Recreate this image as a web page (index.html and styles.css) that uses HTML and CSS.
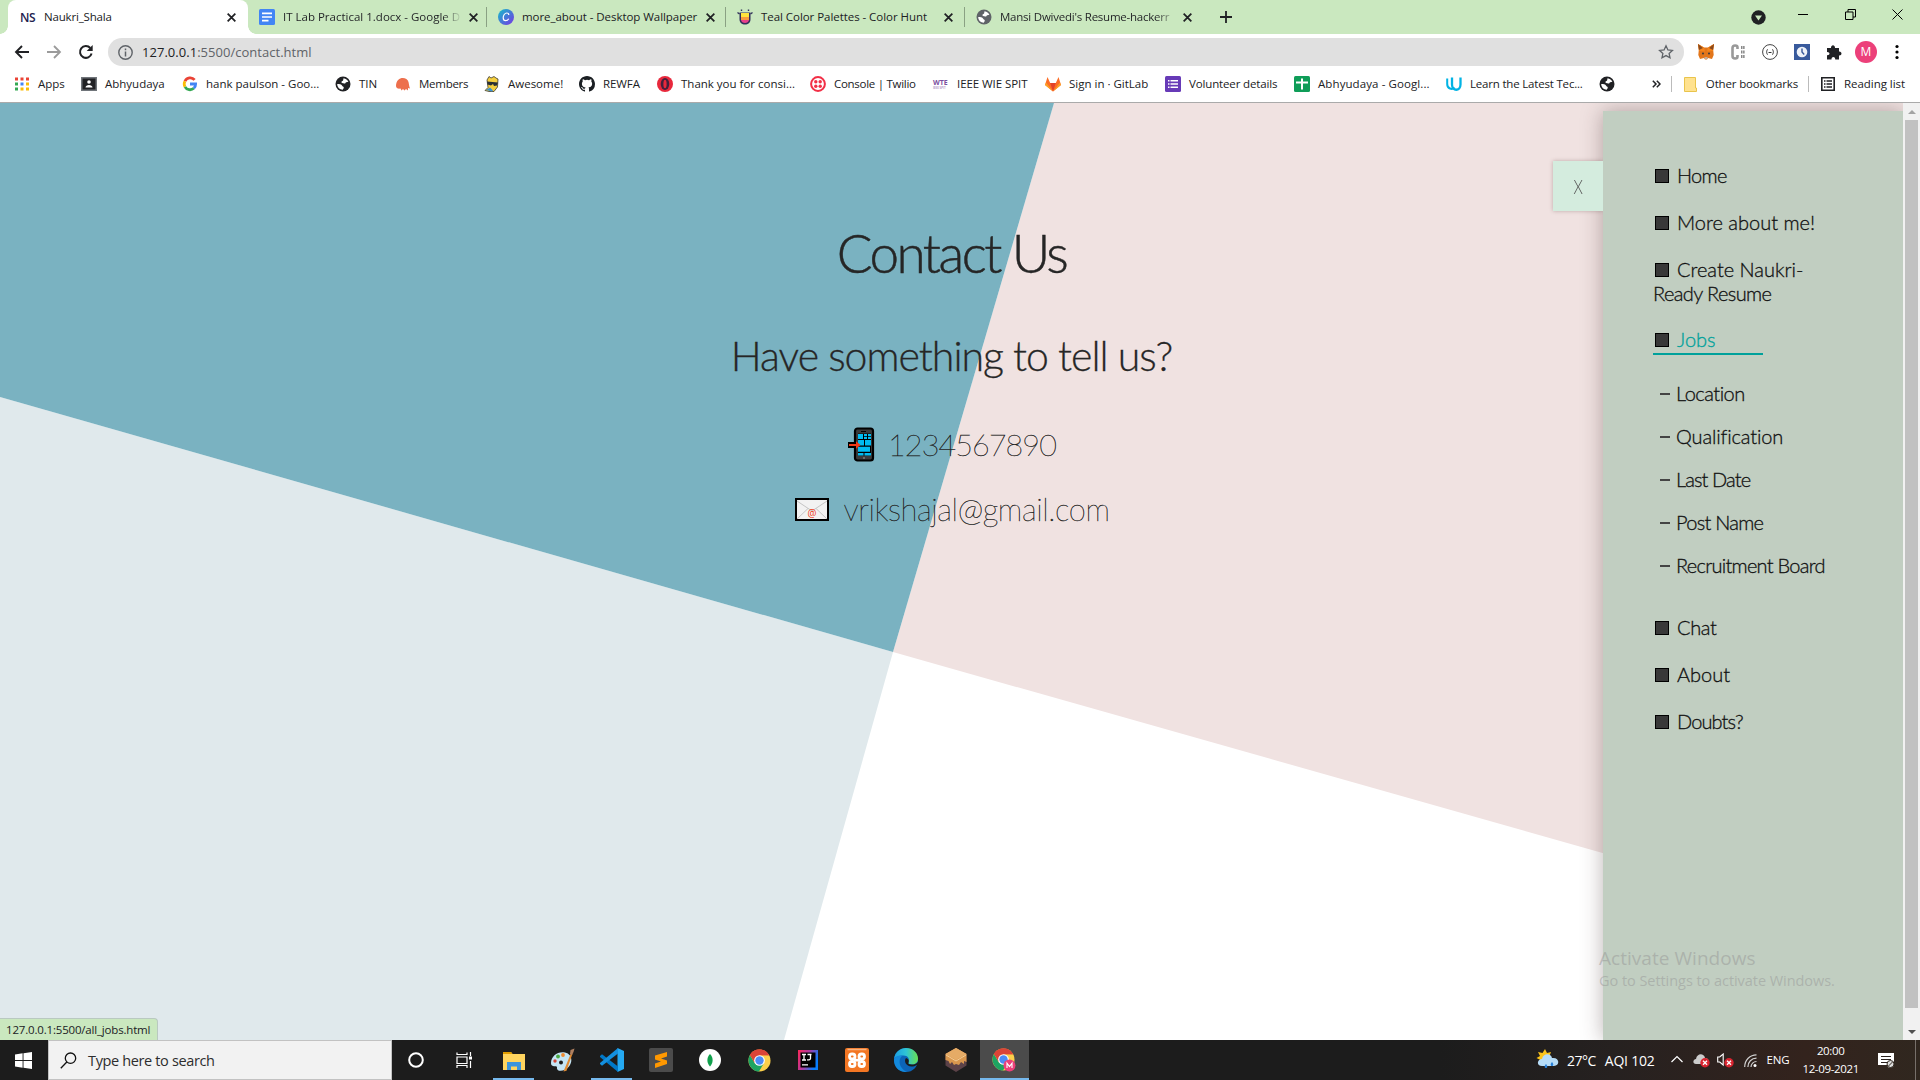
FILE: index.html
```html
<!DOCTYPE html>
<html lang="en">
<head>
<meta charset="utf-8">
<title>Naukri_Shala</title>
<link rel="stylesheet" href="styles.css">
</head>
<body>
<svg class="defs" width="0" height="0">
  <symbol id="globe" viewBox="0 0 16 16"><circle cx="8" cy="8" r="7.500" fill="currentColor"/><path d="M2.200 8c2 0 4.300 0 4.800 1.500.4 1.300 1.800.8 1.800 2.200 0 1-1 1-1 2C5 13.800 2.200 11.500 2.200 8zM8.500 2.300c2.500.2 4 1.700 4.900 3.500l-2.200.4c-.8.2-.6 1.400-1.800 1.300C7.500 7.300 6 7 6.500 5.800 6.800 5 8.300 5 8.200 4z" fill="#fff"/></symbol>
  <symbol id="chrome" viewBox="0 0 24 24"><circle cx="12" cy="12" r="11.500" fill="#fcd04b"/><path d="M12 12 2 6.300A11.500 11.500 0 0 1 22 6.400H12z" fill="#db4437"/><path d="M2 6.300A11.500 11.500 0 0 0 11.500 23.500l5.200-8.800L12 12 7.300 15z" fill="#1da462"/><path d="M2 6.300A11.500 11.500 0 0 1 22 6.400H12L7 14.500z" fill="#db4437"/><circle cx="12" cy="12" r="5.600" fill="#fff"/><circle cx="12" cy="12" r="4.400" fill="#4c8bf5"/></symbol>
  <symbol id="x" viewBox="0 0 10 10"><path d="M1.500 1.500l7 7m0-7l-7 7" stroke="#202124" stroke-width="1.600"/></symbol>
</svg>

<header class="tabs">
  <div class="tab active"><b class="ns">NS</b><span class="title">Naukri_Shala</span><svg class="close"><use href="#x"/></svg></div>
  <div class="tab"><svg class="fav" viewBox="0 0 16 16"><rect width="16" height="16" rx="1.500" fill="#4285f4"/><path d="M3 4.300h10M3 8h10M3 11.700h6.500" stroke="#fff" stroke-width="1.700"/></svg><span class="title">IT Lab Practical 1.docx - Google D</span><svg class="close"><use href="#x"/></svg></div>
  <div class="tab"><svg class="fav" viewBox="0 0 16 16"><defs><linearGradient id="cv" x1="0" x2="1" y2="1"><stop stop-color="#12bfc9"/><stop offset="1" stop-color="#7a35e5"/></linearGradient></defs><circle cx="8" cy="8" r="8" fill="url(#cv)"/><path d="M10.800 6c0-1.500-1-2-2-2-2 0-3.600 2.400-3.600 4.700 0 1.900 1 3 2.500 3 1.400 0 2.400-.8 3-1.900" fill="none" stroke="#fff" stroke-width="1.200"/></svg><span class="title">more_about - Desktop Wallpaper</span><svg class="close"><use href="#x"/></svg></div>
  <div class="tab"><svg class="fav" viewBox="0 0 16 16"><path d="M2.500 3.500h11v6.500c0 4-2.500 5.500-5.500 5.500S2.500 14 2.500 10z" fill="#30305a"/><path d="M4 4h8v4H4z" fill="#ffe43d"/><path d="M4 8h8v3H4z" fill="#f99a3e"/><path d="M4 11h8c-.3 2-2 3-4 3s-3.700-1-4-3z" fill="#e8408c"/><path d="M.5 3.500l2 1.500M15.500 3.500l-2 1.500M4.500.5v1.500M11.500.5v1.500" stroke="#30305a" stroke-width="1.400"/></svg><span class="title">Teal Color Palettes - Color Hunt</span><svg class="close"><use href="#x"/></svg></div>
  <div class="tab"><svg class="fav grey"><use href="#globe"/></svg><span class="title">Mansi Dwivedi's Resume-hackerr</span><svg class="close"><use href="#x"/></svg></div>
  <svg class="plus" viewBox="0 0 12 12"><path d="M6 0v12M0 6h12" stroke="#202124" stroke-width="1.800"/></svg>
  <div class="winctl">
    <svg width="15" height="15" viewBox="0 0 15 15"><circle cx="7.500" cy="7.500" r="7.200" fill="#202124"/><path d="M4 5.500h7L7.500 10.500z" fill="#cae8bf"/></svg>
    <svg width="10" height="10"><path d="M0 5.500h10" stroke="#000"/></svg>
    <svg width="11" height="11"><path d="M.5 3h7.500v7.500H.5zM3 3V.5h7.500V8H8" fill="none" stroke="#000"/></svg>
    <svg width="11" height="11"><path d="M.5.5l10 10m0-10l-10 10" stroke="#000"/></svg>
  </div>
</header>

<div class="toolbar">
  <div class="nav">
    <svg viewBox="0 0 16 16"><path d="M15 8H2M8 2L2 8l6 6" fill="none" stroke="#202124" stroke-width="1.900"/></svg>
    <svg viewBox="0 0 16 16"><path d="M1 8h13M8 2l6 6-6 6" fill="none" stroke="#9b9b9b" stroke-width="1.800"/></svg>
    <svg viewBox="0 0 16 16"><path d="M13.600 9.500A5.900 5.900 0 1 1 12.300 4" fill="none" stroke="#202124" stroke-width="2"/><path d="M14.700 1v6H8.700z" fill="#202124"/></svg>
  </div>
  <div class="omnibox">
    <svg width="15" height="15" viewBox="0 0 15 15"><circle cx="7.500" cy="7.500" r="6.700" fill="none" stroke="#5f6368" stroke-width="1.400"/><path d="M7.500 3.500v1.700M7.500 6.500v5" stroke="#5f6368" stroke-width="1.500"/></svg>
    <span class="url"><em>127.0.0.1</em>:5500/contact.html</span>
    <svg class="star" width="16" height="16" viewBox="0 0 16 16"><path d="M8 1.800l1.900 4.100 4.500.5-3.300 3 .9 4.400-4-2.200-4 2.200.9-4.400-3.300-3 4.500-.5z" fill="none" stroke="#5f6368" stroke-width="1.300"/></svg>
  </div>
  <div class="exts">
    <svg viewBox="0 0 16 16"><path d="M0 0l6 3.500h4L16 0l-.8 6 .5 5-1.700 4-4-1-1 1.500H7L6 14l-4 1-1.700-4 .5-5z" fill="#e2761b"/><path d="M0 0l6 3.500 1 4L1 7zM16 0l-6 3.500-1 4L15 7z" fill="#f6851b"/><path d="M0 0l5 4-4 2zM16 0l-5 4 4 2z" fill="#8a4a1c"/><path d="M6.500 13h3v2h-3z" fill="#c0ad9e"/><circle cx="5" cy="9.500" r=".9" fill="#233447"/><circle cx="11" cy="9.500" r=".9" fill="#233447"/></svg>
    <svg viewBox="0 0 16 16"><path d="M7.500 5V3.500C7.500 1.800 6.700 1.500 5.200 1.500S2.500 2 2.500 4v8c0 2 1 2.500 2.700 2.500S7.500 14 7.500 12.500V11" fill="none" stroke="#999" stroke-width="2.600"/><path d="M11 3.500h3.600M11 8h3.600M11 12.500h3.600" stroke="#888" stroke-width="2.800" stroke-dasharray="1.500 .6"/></svg>
    <svg viewBox="0 0 16 16"><circle cx="8" cy="8" r="7.400" fill="#fff" stroke="#444"/><path d="M5.700 5.500c-1.300 0-.3 2-1.500 2.500 1.200.5.200 2.500 1.500 2.500M10.300 5.500c1.300 0 .3 2 1.500 2.500-1.200.5-.2 2.500-1.500 2.500M6.500 8.500h3" fill="none" stroke="#333"/></svg>
    <svg viewBox="0 0 16 16"><path d="M0 0h16v16H0z" fill="#385a9c"/><circle cx="8" cy="8" r="5.300" fill="#eef2f8"/><path d="M8 4.500V8l2.200 2.500" fill="none" stroke="#385a9c" stroke-width="1.400"/></svg>
    <svg viewBox="0 0 16 16"><path d="M1 4h4C4.800.3 9.200.3 9 4h4v3.500c3.300-.3 3.300 4.300 0 4V15.500H9.200c.3-3.300-4-3.300-3.700 0H1v-4.200c3.300.2 3.300-3.600 0-3.400z" fill="#202124"/></svg>
    <span class="avatar">M</span>
    <svg class="dots" viewBox="0 0 4 16"><circle cx="2" cy="2.500" r="1.600"/><circle cx="2" cy="8" r="1.600"/><circle cx="2" cy="13.500" r="1.600"/></svg>
  </div>
</div>

<nav class="bookmarks">
  <div class="marks">
    <a><svg viewBox="0 0 16 16"><path d="M1 3h14" stroke="#ea4335" stroke-width="3" stroke-dasharray="3 2.500"/><path d="M1 8h3" stroke="#34a853" stroke-width="3"/><path d="M6.500 8h3" stroke="#4285f4" stroke-width="3"/><path d="M12 8h3M6.500 13h3M12 13h3" stroke="#fbbc05" stroke-width="3"/><path d="M1 13h3" stroke="#34a853" stroke-width="3"/></svg><span>Apps</span></a>
    <a><svg viewBox="0 0 16 16"><path d="M0 1h16v14H0z" fill="#70757a"/><path d="M1.500 2.500h13v11h-13z" fill="#202124"/><circle cx="8" cy="6" r="1.800" fill="#fff"/><path d="M4.500 11.500c0-3.500 7-3.500 7 0z" fill="#fff"/></svg><span>Abhyudaya</span></a>
    <a><svg viewBox="0 0 16 16"><g fill="none" stroke-width="2.800"><path d="M12.600 3.900A5.700 5.700 0 0 0 3 5.200" stroke="#ea4335"/><path d="M3 5.200a5.700 5.700 0 0 0 0 5.600" stroke="#fbbc05"/><path d="M3 10.800a5.700 5.700 0 0 0 8.800 1.500" stroke="#34a853"/><path d="M11.800 12.300A5.700 5.700 0 0 0 13.600 8H8" stroke="#4285f4"/></g></svg><span>hank paulson - Goo...</span></a>
    <a><svg><use href="#globe"/></svg><span>TIN</span></a>
    <a><svg viewBox="0 0 16 16"><path d="M1 10C1 0 12 0 13.500 6c.5 2 .5 4 1.500 6.500l-2-.5v2.500l-2-1.500-1.500 1.500L8 13l-1.500 1.500-1-2C3 13 1 12 1 10z" fill="#ed6f4c"/></svg><span>Members</span></a>
    <a><svg viewBox="0 0 16 16"><path d="M3 4l2-3.500L7 2l3-1.500L12 2l2 1-.5 8-3.500 4.500H5l-4-1 3-3z" fill="#f5cf3f" stroke="#222" stroke-width=".7"/><path d="M3 5.500l11 1-1 3-3 .5-1-2-2 1.500-3.500-1z" fill="#2b3036"/><path d="M2 14l4-2.500 3 3-1 1z" fill="#3b8fd0"/></svg><span>Awesome!</span></a>
    <a><svg viewBox="0 0 16 16"><path fill="#1b1f23" d="M8 0C3.580 0 0 3.580 0 8c0 3.540 2.290 6.530 5.470 7.590.4.070.55-.17.550-.38 0-.19-.01-.82-.01-1.490-2.010.37-2.530-.49-2.690-.94-.09-.23-.48-.94-.82-1.130-.28-.15-.68-.52-.01-.53.63-.01 1.080.58 1.230.82.72 1.210 1.870.87 2.330.66.07-.52.28-.87.51-1.070-1.780-.2-3.640-.89-3.640-3.950 0-.87.31-1.590.82-2.150-.08-.2-.36-1.020.08-2.120 0 0 .67-.21 2.200.82a7.600 7.600 0 0 1 4 0c1.530-1.040 2.200-.82 2.200-.82.44 1.100.16 1.920.08 2.120.51.56.82 1.270.82 2.150 0 3.070-1.870 3.750-3.650 3.950.29.25.54.73.54 1.480 0 1.070-.01 1.930-.01 2.200 0 .21.15.46.55.38A8 8 0 0 0 16 8c0-4.420-3.580-8-8-8z"/></svg><span>REWFA</span></a>
    <a><svg viewBox="0 0 16 16"><circle cx="8" cy="8" r="8" fill="#e8283c"/><ellipse cx="8" cy="8" rx="4.300" ry="6" fill="#44203c"/><ellipse cx="8" cy="8" rx="1.600" ry="4.300" fill="#e8283c"/></svg><span>Thank you for consi...</span></a>
    <a><svg viewBox="0 0 16 16"><circle cx="8" cy="8" r="6.900" fill="#fff" stroke="#f22f46" stroke-width="2"/><g fill="#f22f46"><circle cx="5.800" cy="5.800" r="1.700"/><circle cx="10.200" cy="5.800" r="1.700"/><circle cx="5.800" cy="10.200" r="1.700"/><circle cx="10.200" cy="10.200" r="1.700"/></g></svg><span>Console | Twilio</span></a>
    <a><i class="wie"><b>WTE</b><small>IEEE SPIT</small></i><span>IEEE WIE SPIT</span></a>
    <a><svg viewBox="0 0 16 16"><path d="M8 15.500L0 9l2.500-8 2.700 6h5.600l2.700-6L16 9z" fill="#fc6d26"/><path d="M8 15.500L5.200 7h5.600z" fill="#e24329"/><path d="M8 15.500L0 9l1-2.500zM8 15.500L16 9l-1-2.500z" fill="#fca326"/></svg><span>Sign in · GitLab</span></a>
    <a><svg viewBox="0 0 16 16"><rect width="16" height="16" rx="1.500" fill="#673ab7"/><path d="M5.500 4.700H13M5.500 8H13M5.500 11.300H13M3 4.700h1.500M3 8h1.500M3 11.300h1.500" stroke="#fff" stroke-width="1.600"/></svg><span>Volunteer details</span></a>
    <a><svg viewBox="0 0 16 16"><rect width="16" height="16" rx="1.500" fill="#0f9d58"/><path d="M2 6.500h12M8 2.500v11" stroke="#fff" stroke-width="2"/></svg><span>Abhyudaya - Googl...</span></a>
    <a><svg viewBox="0 0 16 16"><path d="M1.200 2.500v5.500c0 5 5 6 7.300 3.500" fill="none" stroke="#02b3e4" stroke-width="2"/><path d="M6 1.500V8.500c0 7 8.500 7 8.500 0V1.500" fill="none" stroke="#02b3e4" stroke-width="2.300"/></svg><span>Learn the Latest Tec...</span></a>
    <a><svg><use href="#globe"/></svg></a>
  </div>
  <div class="extra">
    <svg class="more" width="9" height="8"><path d="M.8.8L4 4 .8 7.200M4.800.8L8 4 4.800 7.200" fill="none" stroke="#202124" stroke-width="1.500"/></svg>
    <i class="sep"></i>
    <svg class="folder" width="13" height="15"><path d="M.5.5h11V11h1v3.500H.5z" fill="#ffe28f" stroke="#e9c44c"/></svg><span>Other bookmarks</span>
    <i class="sep"></i>
    <svg class="list" width="14" height="14"><path d="M.8.8h12.400v12.400H.8z" fill="#fff" stroke="#202124" stroke-width="1.600"/><path d="M3 4h1.500M3 7h1.500M3 10h1.500M5.500 4H11M5.500 7H11M5.500 10H11" stroke="#202124" stroke-width="1.300"/></svg><span>Reading list</span>
  </div>
</nav>

<div class="viewport">
  <main class="page">
    <svg class="backdrop" viewBox="0 0 1903 937" preserveAspectRatio="none">
      <path d="M1054 0H1903V835L893 549z" fill="#f0e2e1"/>
      <path d="M0 294L893 549 784 937H0z" fill="#e0e9ec"/>
      <path d="M0 0H1054L893 549 0 294z" fill="#7ab2c1"/>
    </svg>
    <section class="contact">
      <h1>Contact Us</h1>
      <h2>Have something to tell us?</h2>
      <p class="phone"><svg width="28" height="35" viewBox="0 0 28 35"><rect x="8" y="1.500" width="18" height="32" rx="2.500" fill="#3a3a3a" stroke="#000" stroke-width="2.200"/><path d="M11 6.500h13v22H11z" fill="#000"/><path d="M11 7h5v5h-5zM17 7h3v2.300h-3zM21 7h3v2.300h-3zM17 10h3v2h-3zM21 10h3v2h-3zM11 13h6v5.500h-6zM18 13h6v5.500h-6zM11 19.800h12v5h-12zM11 26h5.500v2.500H11zM17.500 26H24v2.500h-6.500z" fill="#00bcf2"/><path d="M14 4.500h5" stroke="#000"/><path d="M16 31h2" stroke="#999"/><path d="M1 15h6v6H1z"/><path d="M2 18h8" stroke="#f03a17" stroke-width="2"/><path d="M9 14.200l4.500 3.800L9 21.800z" fill="#f03a17"/></svg><span>1234567890</span></p>
      <p class="mail"><svg width="34" height="23" viewBox="0 0 34 23"><path d="M1 1h32v21H1z" fill="#f2f2f2" stroke="#000" stroke-width="2"/><path d="M2 3l15 10L32 3M2 21l11-10.500M32 21L21 10.500" fill="none" stroke="#c4c4c4"/><text x="17" y="19" text-anchor="middle" class="at">@</text></svg><span>vrikshajal@gmail.com</span></p>
    </section>
    <aside class="sidebar">
      <button class="toggle"><span>X</span></button>
      <ul class="menu">
        <li>Home</li><li>More about me!</li><li>Create Naukri-<br><span>Ready Resume</span></li>
        <li class="current">Jobs</li>
        <ul class="sub"><li>Location</li><li>Qualification</li><li>Last Date</li><li>Post Name</li><li>Recruitment Board</li></ul>
        <li>Chat</li><li>About</li><li>Doubts?</li>
      </ul>
    </aside>
    <div class="activate"><strong>Activate Windows</strong><span>Go to Settings to activate Windows.</span></div>
    <div class="status">127.0.0.1:5500/all_jobs.html</div>
  </main>
  <div class="scrollbar"><i class="up"></i><i class="thumb"></i><i class="down"></i></div>
</div>

<footer class="taskbar">
  <div class="start"><svg width="17" height="17" viewBox="0 0 17 17"><path d="M0 2.400L7.600 1.300V8H0zM8.500 1.200L17 0v8H8.500zM0 9h7.600v6.700L0 14.600zM8.500 9H17v8l-8.500-1.200z" fill="#fff"/></svg></div>
  <div class="search"><svg width="17" height="17" viewBox="0 0 17 17"><circle cx="10.500" cy="6.200" r="5.200" fill="none" stroke="#111" stroke-width="1.300"/><path d="M6.800 10L.8 16.200" stroke="#111" stroke-width="1.300"/></svg><span>Type here to search</span></div>
  <div class="apps">
    <div><svg width="16" height="16"><circle cx="8" cy="8" r="6.800" fill="none" stroke="#fff" stroke-width="2"/></svg></div>
    <div><svg width="17" height="17"><path d="M1 .5v2h10v-2M1 16v-2.500h10V16M1 5h10v6.500H1zM14.500 0v4M14.500 9v7" fill="none" stroke="#fff" stroke-width="1.200"/><path d="M13 4.500h3v3h-3z" fill="#fff"/></svg></div>
    <div class="run"><svg width="22" height="19"><path d="M0 1h8l1.500 2H22v16H0z" fill="#ffd45e"/><path d="M0 1h8l1.500 2H0z" fill="#e09c00"/><path d="M4 19v-8h14v8h-4v-3.500H8V19z" fill="#3c94dc"/></svg></div>
    <div><svg width="25" height="24" viewBox="0 0 25 24"><path d="M1 15C1 8 8 3 15 4.500c7 1.500 8 9 4 14-5 6-13 5-12 1 .3-2-2-1-4-1.500-1.500-.3-2-1.500-2-3z" fill="#c5e5f5"/><circle cx="5" cy="13" r="1.700" fill="#d24637"/><circle cx="8" cy="8.500" r="1.900" fill="#49a942"/><circle cx="13" cy="7" r="1.900" fill="#f08a30"/><circle cx="11" cy="14.500" r="2" fill="#1c1c1c"/><path d="M13.500 23.500L21 5l1.500.8-6 17z" fill="#e08a32"/><path d="M20 6l.5-4L24.500.5 23.500 4l-1.500 3z" fill="#b08060"/></svg></div>
    <div class="run"><svg width="24" height="24" viewBox="0 0 24 24"><path d="M17.500 0L24 3v18l-6.500 3z" fill="#25a9f2"/><path d="M0 8l2-1.700L18 18.500V24L0 9z" fill="#0078c8"/><path d="M0 16l2 1.700L18 5.500V0L0 15z" fill="#1390df"/></svg></div>
    <div><svg width="24" height="24" viewBox="0 0 24 24"><rect width="24" height="24" rx="2" fill="#4b4b4b"/><path d="M6 7.500L18 4v4.500l-6 2 6 2V16L6 20v-4.500l6-2-6-2z" fill="#ff9800"/></svg></div>
    <div><svg width="22" height="22"><circle cx="11" cy="11" r="11" fill="#fff"/><path d="M11 5c4 4 3 9.500 0 12.500-3-3-4-8.500 0-12.500z" fill="#10a04c"/></svg></div>
    <div><svg width="23" height="23"><use href="#chrome"/></svg></div>
    <div><svg width="20" height="20"><defs><linearGradient id="ij" x1="0" x2="1" y2=".4"><stop stop-color="#fe2857"/><stop offset=".5" stop-color="#b2399e"/><stop offset="1" stop-color="#087cfa"/></linearGradient></defs><path d="M0 0h20v20H0z" fill="url(#ij)"/><path d="M2.500 2.500h15v15h-15z" fill="#000"/><path d="M4 4.500h4M6 4.500v5.500M4 10h4M9.500 4.500h4M12.500 4.500v4q0 1.500-3.500 1.300M4 14.800h6" fill="none" stroke="#fff" stroke-width="1.300"/></svg></div>
    <div><svg width="24" height="24"><rect width="24" height="24" rx="2" fill="#f37623"/><path d="M2.500 1.500h19" stroke="#f9b37d" stroke-width="1.500"/><g fill="none" stroke="#fff" stroke-width="2.800"><rect x="4.500" y="6" width="5.500" height="5" rx="2.500"/><rect x="14" y="6" width="5.500" height="5" rx="2.500"/><rect x="4.500" y="13.500" width="5.500" height="5" rx="2.500"/><rect x="14" y="13.500" width="5.500" height="5" rx="2.500"/><path d="M9 12.200h6"/></g></svg></div>
    <div><svg width="24" height="24" viewBox="0 0 24 24"><defs><linearGradient id="eg"><stop stop-color="#1b9de2"/><stop offset=".5" stop-color="#2ec4d6"/><stop offset="1" stop-color="#69e04f"/></linearGradient></defs><circle cx="12" cy="12" r="12" fill="#0c64b8"/><path d="M0 11C1 4 6 0 12 0c7 0 12 5 12 10.500 0 4-3 6-6 6-2.500 0-4-.8-3.500-2C16 11 14 7.500 9.500 7.500 5 7.500 1 9 0 11z" fill="url(#eg)"/><path d="M0 12c0-3 4-5 9-4.500-4 2-4.500 8-1.500 12 1.500 2 3.500 3.500 5.500 4.500C5 24.500 0 19 0 12z" fill="#1389dc"/><path d="M12 10c-2.500 3 0 8.500 5.500 8.500 2 0 3.500-.5 5-1.500l1 1c-1 1.500-2 3-3 4L24 24V14c-2 2-4.500 2.700-6.500 2.500-3 0-3.500-1-3-2 .8-2 0-4-2.500-4.500z" fill="#1c1c1c"/></svg></div>
    <div><svg width="22" height="24"><path d="M11 0l10.500 6v11.500L11 24 .5 17.500V6z" fill="#5c4248"/><path d="M11 0l10.500 6v8l-2.500-1v3l-3-2-2 3-3-1-2 1-2-3-2 2-1.500-3-3-1V6z" fill="#d9974e"/><path d="M11 0l10.500 6L11 12 .5 6z" fill="#e5ab66"/><path d="M1 7l10 6 10-6" fill="none" stroke="#f3cc94"/></svg></div>
    <div class="run focus"><svg width="25" height="25" viewBox="0 0 25 25"><use href="#chrome" width="23" height="23"/><circle cx="17.500" cy="17.500" r="6" fill="#ec407a"/><path d="M15 20v-4.800l2.500 3.400 2.500-3.400V20" fill="none" stroke="#fff" stroke-width="1.100"/></svg></div>
  </div>
  <div class="tray">
    <svg width="23" height="22"><path d="M9 0l2 4 4-1-1.500 4 1 4-5 1-4 2-1-3-4-2 3.500-2L2 3l4.500 1z" fill="#fcc419"/><path d="M6 17c-6 0-5-7 0-7 1-6 9-6 10-1 8-1 8 8 2 8z" fill="#b6dcf7"/><path d="M10 15c2 2 1.500 4 0 4s-2-2 0-4zM16 13c2 2 1.500 4 0 4s-2-2 0-4z" fill="#2880d8"/></svg>
    <span class="temp">27°C</span><span class="aqi">AQI 102</span>
    <svg class="caret" width="12" height="8"><path d="M.5 7L6 1.500 11.500 7" fill="none" stroke="#fff" stroke-width="1.200"/></svg>
    <svg class="cloud" width="17" height="15"><path d="M3 11c-4 0-3-5 0-5 1-6 8-6 9-1 3 0 4 2 4 6z" fill="#ccc"/><circle cx="12" cy="9.800" r="4.700" fill="#d8242f"/><path d="M10 7.800l4 4m0-4l-4 4" stroke="#fff" stroke-width="1.300"/></svg>
    <svg class="sound" width="17" height="15"><path d="M.7 4h2l3.500-3v11L2.700 9h-2z" fill="none" stroke="#fff" stroke-width="1.100"/><circle cx="12" cy="9.800" r="4.700" fill="#d8242f"/><path d="M10 7.800l4 4m0-4l-4 4" stroke="#fff" stroke-width="1.300"/></svg>
    <svg class="wifi" width="13" height="13"><path d="M.7 13C.7 6 6 .8 12.500.8M3.900 13c0-5 3.600-8.800 8.600-8.800M7 13c0-3 2.500-5.500 5.500-5.500" fill="none" stroke="#d0d0d0" stroke-width="1.200"/><circle cx="11" cy="11.500" r="1.500" fill="#fff"/></svg>
    <span class="lang">ENG</span>
    <div class="clock"><span>20:00</span><span>12-09-2021</span></div>
    <svg class="note" width="17" height="17"><path d="M0 1h16v12h-3l-2 3-2-3H0z" fill="#fff"/><path d="M3 4.500h10M3 7.500h10M3 10.500h6" stroke="#2a211d" stroke-width="1.200"/><circle cx="12.500" cy="12" r="3.500" fill="#ddd" stroke="#332a22"/><path d="M10.500 14l4-4" stroke="#332a22"/></svg>
  </div>
</footer>
</body>
</html>
```
FILE: styles.css
```css
* { box-sizing: border-box; }
body { margin: 0; width: 1920px; height: 1080px; overflow: hidden; display: flex; flex-direction: column; font: 11.5px "Open Sans", sans-serif; color: #202124; background: #fff; }
svg { display: block; flex: none; }
span { white-space: nowrap; }
.defs { position: absolute; }

/* tab strip */
.tabs { flex: none; height: 34px; background: #cae8bf; display: flex; align-items: center; padding-left: 8px; }
.tab { width: 239px; height: 34px; display: flex; align-items: center; padding: 0 11px 0 11px; position: relative; }
.tab.active { width: 240px; padding-left: 12px; background: #fff; border-radius: 8px 8px 0 0; }
.tab.active::before, .tab.active::after { content: ""; position: absolute; bottom: 0; width: 8px; height: 8px; }
.tab.active::before { left: -8px; background: radial-gradient(circle at 0 0, #cae8bf 7.5px, #fff 8px); }
.tab.active::after { right: -8px; background: radial-gradient(circle at 100% 0, #cae8bf 7.5px, #fff 8px); }
.tab + .tab:not(:nth-child(2))::before { content: ""; position: absolute; left: -1px; top: 7px; width: 1px; height: 20px; background: #8aa183; }
.ns { width: 16px; font-size: 12px; font-weight: 600; color: #22214f; letter-spacing: -.3px; }
.fav { width: 16px; height: 16px; }
.fav.grey { color: #5f6368; }
.title { flex: 1; margin: 0 8px; padding-bottom: 1px; }
.tab:nth-child(2) .title { background: linear-gradient(90deg, #202124 160px, rgba(32, 33, 36, .1) 177px); -webkit-background-clip: text; background-clip: text; color: transparent; }
.tab:nth-child(5) .title { background: linear-gradient(90deg, #202124 155px, rgba(32, 33, 36, .1) 177px); -webkit-background-clip: text; background-clip: text; color: transparent; }
.tab:nth-child(1) .title { letter-spacing: -.17px; }
.tab:nth-child(3) .title, .tab:nth-child(4) .title { letter-spacing: -.05px; }
.tab:nth-child(5) .title { letter-spacing: -.23px; }
.close { width: 11px; height: 11px; }
.plus { width: 12px; height: 12px; margin-left: 16px; }
.winctl { margin-left: auto; display: flex; align-items: center; gap: 36px; padding: 0 17px 6px 0; }
.winctl svg:first-child { margin-top: 6px; margin-right: -5px; }
.winctl svg:nth-child(2) { margin-right: 1px; margin-left: 1px; }

/* toolbar */
.toolbar { flex: none; height: 36px; display: flex; align-items: center; padding: 0 20px 0 14px; }
.nav { display: flex; gap: 16px; width: 94px; }
.nav svg { width: 16px; height: 16px; }
.omnibox { width: 1576px; height: 28px; border-radius: 14px; background: #e0e0e0; display: flex; align-items: center; padding: 0 10px; }
.url { margin-left: 9px; font-size: 13px; letter-spacing: .03px; color: #5f6368; }
.url em { font-style: normal; color: #202124; }
.star { margin-left: auto; }
.exts { display: flex; align-items: center; gap: 16px; flex: 1; margin-left: 14px; }
.exts svg { width: 16px; height: 16px; }
.exts .dots { width: 4px; margin-left: 5px; }
.avatar { width: 22px; height: 22px; margin: 0 -3px; border-radius: 50%; background: #ec407a; color: #fff; text-align: center; line-height: 22px; font-size: 12px; }

/* bookmarks */
.bookmarks { flex: none; height: 33px; border-bottom: 1px solid #aaa; padding: 0 15px 4px 14px; display: flex; align-items: center; justify-content: space-between; }
.bookmarks span { padding-bottom: 1px; }
.marks { display: grid; grid-template-columns: 67px 101px 153px 60px 89px 95px 78px 153px 123px 112px 120px 129px 152px 153px 16px; }
.marks a { display: flex; align-items: center; gap: 8px; }
.marks svg { width: 16px; height: 16px; }
.marks a:nth-child(2n+5) span { letter-spacing: -.08px; }
.marks a:nth-child(5) span { letter-spacing: -.27px; }
.marks a:nth-child(9) span { letter-spacing: -.28px; }
.marks a:nth-child(10) span { letter-spacing: -.07px; }
.marks a:nth-child(11) span { letter-spacing: 0; }
.marks a:nth-child(12) span { letter-spacing: -.14px; }
.marks a:nth-child(13) span { letter-spacing: .09px; }
.marks a:nth-child(14) span { letter-spacing: -.19px; }
.wie { width: 16px; display: flex; flex-direction: column; font-style: normal; color: #7a4fa0; line-height: 7px; white-space: nowrap; }
.wie b { font-size: 7px; }
.wie small { font-size: 3px; line-height: 4px; }
.extra { display: flex; align-items: center; }
.extra span { margin-left: 9px; letter-spacing: -.15px; }
.extra span:last-child { letter-spacing: -.05px; }
.sep { width: 1px; height: 16px; background: #bbb; margin: 0 12px 0 10px; }

/* viewport */
.viewport { flex: none; height: 937px; display: flex; }
.page { position: relative; width: 1903px; display: flex; overflow: hidden; font-family: Lato, sans-serif; }
.backdrop { position: absolute; inset: 0; width: 100%; height: 100%; }
.contact { position: relative; width: 1903px; flex: none; padding-top: 119px; text-align: center; color: #262626; }
.contact h1 { margin: 0 0 47px; font-weight: 300; font-size: 53px; line-height: 62px; letter-spacing: -2.5px; -webkit-text-stroke: .5px; }
.contact h2 { margin: 0 0 46px; font-weight: 300; font-size: 41px; line-height: 49px; letter-spacing: -1px; -webkit-text-stroke: .3px; }
.contact p { margin: 0; display: flex; align-items: center; justify-content: center; font-weight: 100; color: #222; -webkit-text-stroke: .35px; }
.contact p svg { -webkit-text-stroke: 0; }
.contact .phone { font-size: 30.5px; line-height: 36px; letter-spacing: -.9px; gap: 13px; margin-bottom: 29px; }
.contact .mail { font-size: 31px; line-height: 37px; letter-spacing: -.4px; gap: 14px; padding-left: 2px; }
.at { font: 10px "Open Sans", sans-serif; fill: #f03a17; letter-spacing: 0; }

.sidebar { position: relative; flex: none; width: 300px; margin: 8px 0 0 -300px; padding: 52px 50px 0; background: #c1cec1; box-shadow: 0 0 20px rgba(60, 40, 40, .35); }
.toggle { position: absolute; left: -50px; top: 50px; width: 50px; height: 50px; border: 0; padding: 0; background: #d4ecde; box-shadow: 0 0 4px rgba(80, 40, 40, .3); clip-path: inset(-6px 0 -6px -6px); font: 300 20px Lato, sans-serif; color: #555; }
.toggle span { display: inline-block; transform: scaleX(.75); }
.menu, .sub { list-style: none; margin: 0; padding: 0; }
.menu { font-weight: 300; font-size: 20px; line-height: 24px; color: #111; -webkit-text-stroke: .3px; }
.menu > li { margin-bottom: 23px; white-space: nowrap; }
.menu > li::before { content: ""; display: inline-block; width: 12px; height: 12px; margin: 0 8px 0 2px; border: 1px solid #000; background: #383838; vertical-align: 0; }
.menu > li:nth-child(1) { letter-spacing: -.7px; }
.menu > li:nth-child(3) { margin-bottom: 22px; }
.menu > li:nth-child(3) span { letter-spacing: -.6px; }
.menu > .current { width: 110px; height: 28px; border-bottom: 2px solid #00a19b; color: #00a19b; margin-bottom: 25.5px; }
.sub { margin-bottom: 38.500px; display: flex; flex-direction: column; gap: 19px; }
.sub li::before { content: ""; display: inline-block; width: 10px; height: 1.500px; margin: 0 6px 0 7px; background: #444; vertical-align: 6px; }
.sub li:nth-child(1) { letter-spacing: -.5px; }
.sub li:nth-child(2) { letter-spacing: -.13px; }
.sub li:nth-child(3) { letter-spacing: -.9px; }
.sub li:nth-child(4), .sub li:nth-child(5) { letter-spacing: -.74px; }
.menu > li:nth-child(6) { letter-spacing: -.33px; }
.menu > li:nth-child(8) { letter-spacing: -.9px; }

.activate { position: absolute; left: 1599px; top: 842px; display: flex; flex-direction: column; font-family: "Open Sans", sans-serif; color: rgba(150, 150, 150, .5); }
.activate strong { font-weight: 400; font-size: 19px; line-height: 26px; letter-spacing: .04px; }
.activate span { font-size: 14.500px; line-height: 19px; letter-spacing: -.05px; }
.status { position: absolute; left: 0; bottom: 0; width: 158px; height: 22px; padding-left: 6px; background: #cae8bf; border: 1px solid #b9c9c0; border-width: 1px 1px 0 0; border-radius: 0 4px 0 0; font: 11.500px/21px "Open Sans", sans-serif; letter-spacing: -.18px; }

.scrollbar { width: 17px; background: #f1f1f1; display: flex; flex-direction: column; align-items: center; padding: 7px 0 6px; }
.up { border: 4px solid transparent; border-top: 0; border-bottom-color: #a3a3a3; margin-bottom: 6px; }
.thumb { width: 13px; height: 888px; background: #c1c1c1; }
.down { border: 4px solid transparent; border-bottom: 0; border-top-color: #505050; margin-top: auto; }

/* taskbar */
.taskbar { flex: none; height: 40px; display: flex; color: #fff; background: linear-gradient(90deg, #1c1c1c 75%, #262120 84%, #33231d 94%, #30271f); }
.start { width: 48px; display: flex; align-items: center; justify-content: center; }
.start svg { margin-right: 1px; }
.search { width: 344px; background: #f2f2f2; border: 1px solid #c2c2c2; color: #2d2d2d; display: flex; align-items: center; gap: 11px; padding-left: 11px; font-size: 14.500px; letter-spacing: -.36px; }
.apps { display: flex; margin-left: -1px; }
.apps div { width: 49.100px; display: flex; align-items: center; justify-content: center; position: relative; }
.run::after { content: ""; position: absolute; bottom: 0; left: 4px; right: 4px; height: 2px; background: #76b9ed; }
.run.focus { background: #4b4b4b; }
.run.focus::after { left: 0; right: 0; }
.tray { margin-left: auto; display: flex; align-items: center; border-right: 1px solid #77706a; margin-right: 4px; padding-right: 19px; }
.temp, .aqi { font-size: 14px; margin-left: 8px; letter-spacing: -.5px; }
.aqi { margin-left: 9px; letter-spacing: -.22px; }
.caret { margin-left: 16px; margin-top: -3px; }
.cloud { margin-left: 10px; }
.sound { margin-left: 7px; }
.wifi { margin-left: 10px; }
.lang { margin-left: 10px; margin-top: -2px; letter-spacing: -.2px; }
.clock { display: flex; flex-direction: column; align-items: center; line-height: 18px; margin-left: 13px; letter-spacing: -.34px; }
.note { margin-left: 19px; margin-right: 1px; }
```
